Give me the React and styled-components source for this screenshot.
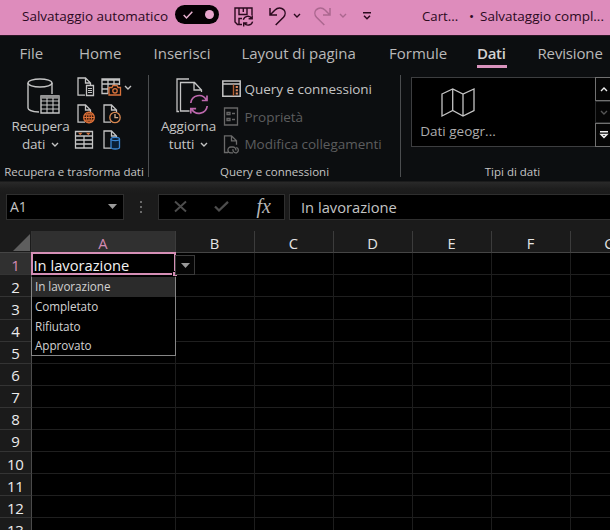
import React from "react";
import styled, { createGlobalStyle, css } from "styled-components";

const pink = "#de8cbc";
const plum = "#2b0a1e";
const ink = "#c4c4c4";
const dim = "#5c5d5e";

const GlobalStyle = createGlobalStyle`
  * { box-sizing: border-box; }
  body { margin: 0; background: #000; overflow: hidden; }
  svg { display: block; flex: none; overflow: visible; }
`;

const Window = styled.main`
  width: 610px;
  height: 530px;
  overflow: hidden;
  display: flex;
  flex-direction: column;
  background: #000;
  color: ${ink};
  font-family: "Open Sans", "Noto Sans", sans-serif;
  font-size: 13.5px;
  white-space: nowrap;
`;

/* ---------- Title bar ---------- */

const TitleBar = styled.header`
  height: 36px;
  flex: none;
  display: flex;
  align-items: flex-start;
  background: ${pink};
  border-bottom: 1px solid #2c1525;
  color: ${plum};
`;

const TitleText = styled.span`
  width: ${(p) => p.$w}px;
  flex: none;
  line-height: 20px;
  padding: 6px 0 0 ${(p) => p.$pad || 0}px;
  font-size: ${(p) => p.$size || 13.5}px;
`;

const Toggle = styled.button`
  width: 44px;
  height: 19px;
  flex: none;
  margin: 5px 15px 0 0;
  padding: 0 5px 0 8px;
  border: 0;
  border-radius: 10px;
  background: #050003;
  display: flex;
  align-items: center;
  justify-content: space-between;
`;

const Knob = styled.span`
  width: 9px;
  height: 9px;
  border-radius: 50%;
  background: #e9a5cc;
`;

const QuickIcon = styled.span`
  width: ${(p) => p.$w}px;
  flex: none;
  padding-top: ${(p) => p.$top}px;
  opacity: ${(p) => (p.$off ? 0.28 : 1)};
`;

/* ---------- Ribbon ---------- */

const Tabs = styled.nav`
  height: 34px;
  flex: none;
  display: flex;
  background: #0c0e10;
  padding-left: 19.5px;
`;

const Tab = styled.a`
  width: ${(p) => p.$w}px;
  flex: none;
  height: 32px;
  line-height: 34px;
  font-size: 15px;
  letter-spacing: ${(p) => p.$ls || 0}px;
  color: #b9b9b9;
  ${(p) =>
    p.$active &&
    css`
      width: 30px;
      margin-right: ${p.$w - 30}px;
      font-weight: 600;
      color: #d2d2d2;
      letter-spacing: -0.3px;
      border-bottom: 3px solid #d993bd;
    `}
`;

const Ribbon = styled.section`
  height: 111px;
  flex: none;
  display: flex;
  background: #0c0e10;
`;

const Group = styled.div`
  width: ${(p) => p.$w}px;
  flex: none;
  display: flex;
  flex-direction: column;
`;

const Separator = styled.div`
  width: 1px;
  height: 102px;
  margin-top: 5px;
  flex: none;
  background: #4b4d4f;
`;

const GroupBody = styled.div`
  height: 92px;
  padding: 7px 0 0 ${(p) => p.$left}px;
  display: flex;
  align-items: flex-start;
`;

const GroupLabel = styled.div`
  height: 19px;
  line-height: 19px;
  text-align: center;
  font-size: 11.5px;
`;

const BigButton = styled.button`
  width: ${(p) => p.$w}px;
  flex: none;
  padding: 1px 0 0;
  border: 0;
  background: none;
  color: inherit;
  font: inherit;
  line-height: 18px;
  letter-spacing: ${(p) => p.$ls || 0}px;
  display: flex;
  flex-direction: column;
  align-items: center;
`;

const BigIcon = styled.span`
  padding: 0 0 3px ${(p) => p.$shift}px;
`;

const BigCaption = styled.span`
  display: flex;
  align-items: center;
  gap: 6px;
`;

const IconGrid = styled.div`
  display: grid;
  grid-template-columns: 23.5px 23.5px 10px;
  grid-template-rows: 26.5px 26.5px 20px;
  padding-left: 3px;
`;

const CameraMenu = styled.span`
  padding-top: 8px;
`;

const CommandList = styled.div`
  display: flex;
  flex-direction: column;
  margin-top: -2px;
`;

const Command = styled.button`
  height: 27.8px;
  padding: 0;
  border: 0;
  background: none;
  font: inherit;
  color: ${(p) => (p.$off ? dim : ink)};
  display: grid;
  grid-template-columns: 22.5px auto;
  justify-content: start;
  align-items: center;
  letter-spacing: -0.03px;
`;

const Gallery = styled.div`
  width: 185px;
  height: 70px;
  flex: none;
  border: 1px solid #3d3e40;
  background: #000;
`;

const GalleryItem = styled.div`
  width: 92px;
  padding-top: 10px;
  display: flex;
  flex-direction: column;
  align-items: center;
  color: #adadad;
  line-height: 20px;
  gap: 4px;
`;

const GalleryScroll = styled.div`
  width: 20px;
  height: 70px;
  margin-left: -1px;
  flex: none;
  display: grid;
  grid-template-rows: 24px 22px 24px;
`;

const ScrollButton = styled.button`
  border: 1px solid ${(p) => (p.$off ? "#2c2d2e" : "#717171")};
  background: #050505;
  padding: 0 0 0 4px;
  display: flex;
  align-items: center;
`;

/* ---------- Formula bar ---------- */

const FormulaBar = styled.section`
  height: 50px;
  flex: none;
  display: flex;
  align-items: flex-start;
  padding: 13px 0 0 6px;
  background: linear-gradient(#0d0e0f 0, #292929 1px, #1d1d1d 8px, #1b1b1b 12px);
`;

const Field = styled.div`
  width: ${(p) => p.$w}px;
  height: 26px;
  flex: none;
  border: 1px solid #2f2f2f;
  background: #000;
  display: flex;
  align-items: center;
  font-size: ${(p) => p.$size || 14.7}px;
  padding: 0 ${(p) => p.$right || 0}px 1px ${(p) => p.$left}px;
  justify-content: space-between;
`;

const Grip = styled.div`
  width: 34px;
  height: 26px;
  flex: none;
  display: flex;
  align-items: center;
  justify-content: center;
`;

const FormulaValue = styled(Field)`
  margin-left: 4px;
`;

const Fx = styled.i`
  font: italic 20px/20px "Liberation Serif", serif;
  color: #b5b5b5;
  padding-bottom: 2px;
`;

/* ---------- Sheet ---------- */

const Sheet = styled.section`
  position: relative;
  display: grid;
  grid-template-columns: 31.5px 144px repeat(6, 79px);
  grid-template-rows: 22.3px repeat(13, 22.08px);
`;

const Corner = styled.div`
  background: #1b1b1b;
  border-right: 1px solid #333;
  border-bottom: 1px solid #454545;
  padding: 3px 1px 0 0;
  display: flex;
  justify-content: flex-end;
`;

const ColumnHead = styled.div`
  display: flex;
  align-items: center;
  justify-content: center;
  padding-top: 3px;
  font-size: 14.7px;
  color: ${(p) => (p.$active ? "#d58ab4" : "#e4e4e4")};
  background: ${(p) => (p.$active ? "#303030" : "#1b1b1b")};
  border-right: 1px solid #3c3c3c;
  border-bottom: 1px solid #454545;
`;

const RowHead = styled.div`
  display: flex;
  align-items: center;
  justify-content: center;
  padding-top: 2px;
  font-size: 15px;
  letter-spacing: -0.4px;
  color: ${(p) => (p.$active ? "#d58ab4" : "#ececec")};
  background: ${(p) => (p.$active ? "#303030" : "#1b1b1b")};
  border-right: 1px solid #4a4a4a;
  border-bottom: 1px solid #343434;
`;

const Cell = styled.div`
  border-right: 1px solid #1d1d1d;
  border-bottom: 1px solid #1f1f1f;
`;

const SelectedCell = styled.div`
  position: relative;
  margin: -1px 0 0 -1px;
  border: 2px solid #d58fb6;
  background: #000;
  color: #f2f2f2;
  font-size: 14.7px;
  line-height: 22px;
  padding-left: 1px;
  z-index: 2;
`;

const FillHandle = styled.span`
  position: absolute;
  right: -3px;
  bottom: -3px;
  width: 5px;
  height: 5px;
  background: #d58fb6;
  border: solid #000;
  border-width: 1px 0 0 1px;
`;

const DropButton = styled.button`
  position: absolute;
  left: 175px;
  top: 24px;
  width: 20px;
  height: 20px;
  padding: 0;
  border: 1px solid #3a3a3a;
  background: #050505;
  display: flex;
  align-items: center;
  justify-content: center;
  z-index: 3;
`;

const Menu = styled.ul`
  position: absolute;
  left: 31px;
  top: 46px;
  width: 145px;
  height: 79px;
  margin: 0;
  padding: 0;
  list-style: none;
  border: 1px solid #868686;
  border-top: 0;
  background: #000;
  z-index: 1;
`;

const Option = styled.li`
  height: 19.8px;
  line-height: 19.6px;
  padding-left: 3px;
  font-size: 11.7px;
  letter-spacing: -0.06px;
  color: #d2d2d2;
  background: ${(p) => (p.$active ? "#2b2b2b" : "transparent")};
`;

/* ---------- Icons ---------- */

const Line = styled.svg.attrs({ fill: "none" })`
  stroke: ${(p) => p.$c || ink};
  stroke-width: ${(p) => p.$sw || 1.3};
`;

const Chevron = ({ c = ink, up }) => (
  <Line width="8" height="5" viewBox="0 0 8 5" $c={c} $sw="1.4">
    <path d={up ? "M1 4l3-3 3 3" : "M1 1l3 3 3-3"} />
  </Line>
);

const Caret = () => (
  <svg width="9" height="5" viewBox="0 0 9 5">
    <path d="M0 0h9L4.5 5z" fill="#9a9a9a" />
  </svg>
);

const SaveIcon = () => (
  <Line width="20" height="20" viewBox="0 0 20 20" $c={plum} $sw="1.4">
    <path d="M8 17.5H3.5L1 15V1h17v7M5 1v6.500h8V1M9.300 1v4M5 17v-5.500h3" />
    <path d="M9.300 12.800a4.700 4.700 0 0 1 8.500-1.300M18.200 8.200v3.600h-3.600M18.600 14.600a4.700 4.700 0 0 1-8.400 1.500M9.700 19.600V16h3.600" />
  </Line>
);

const UndoIcon = ({ flip }) => (
  <Line width="17" height="19" viewBox="0 0 17 19" $c={plum} $sw="1.5">
    <path
      transform={flip ? "matrix(-1 0 0 1 17 0)" : undefined}
      d="M1 1v7h7M1.300 7.700L6 3.100C9-.1 12.600.6 14.600 2.600c2 2.100 2 5.400-.1 7.600L6.700 18"
    />
  </Line>
);

const CustomizeIcon = () => (
  <Line width="8" height="8" viewBox="0 0 8 8" $c={plum} $sw="1.5">
    <path d="M0 .8h8M1 3.800l3 3 3-3" />
  </Line>
);

const DatabaseIcon = () => (
  <Line width="33" height="36" viewBox="0 0 33 36" $sw="1.4">
    <ellipse cx="13" cy="5" rx="12" ry="4" />
    <path d="M1 5v25c0 2 4.500 3.700 11 4M25 5v11" />
    <path d="M14 18h18v17H14z" fill="#0c0e10" />
    <path d="M14 19.400h18" strokeWidth="2.6" stroke="#929292" />
    <path d="M14 23h18M14 27h18M14 31h18M20 20v15M26 20v15" strokeWidth="1.1" />
  </Line>
);

const Page = () => <path d="M8 18.200H1V1h7.500l5 5v2M8.500 1v5h5" />;

const TextFileIcon = () => (
  <Line width="18" height="20" viewBox="0 0 18 20">
    <Page />
    <path d="M9.500 8.500h7v10h-7z" fill="#0c0e10" />
    <path d="M11 11.500h4M11 13.500h4M11 15.500h4" strokeWidth="1" />
  </Line>
);

const CameraTableIcon = () => (
  <Line width="20" height="20" viewBox="0 0 20 20">
    <path d="M7 16.500H1V2h17.500v6M1 3h17.500M1 7h17.500M1 12h6M7 2v14.500M13 2v6" />
    <path d="M8 10.500h3l1-2h4l1 2h2.500v7.500H8z" stroke="#d9733c" fill="#0c0e10" />
    <circle cx="14" cy="13.800" r="2.200" stroke="#d9733c" />
  </Line>
);

const WebFileIcon = () => (
  <Line width="18" height="20" viewBox="0 0 18 20">
    <Page />
    <circle cx="12" cy="13.500" r="5.300" fill="#32170b" stroke="#dc7038" />
    <path d="M6.700 13.500h10.600M7.700 10.800h8.600M7.700 16.200h8.600M12 8.200v10.600" stroke="#dc7038" strokeWidth="1" />
    <ellipse cx="12" cy="13.500" rx="2.500" ry="5.300" stroke="#dc7038" strokeWidth="1" />
  </Line>
);

const RecentFileIcon = () => (
  <Line width="20" height="20" viewBox="-2 0 20 20">
    <Page />
    <circle cx="12" cy="13.500" r="5.200" fill="#0c0e10" stroke="#d98850" />
    <path d="M12 10v3.700h3.200" stroke="#d9b08c" />
  </Line>
);

const TableIcon = () => (
  <Line width="18" height="20" viewBox="1.5 0 18 20">
    <path d="M0 1.500h17v16.500H0zM0 6h17M0 10h17M0 14h17M8.500 6v12" />
    <path d="M2.500 2.800h4.500l-2.200 2.500zM10.500 2.800H15l-2.200 2.500z" fill="#d9733c" stroke="none" />
  </Line>
);

const SourceFileIcon = () => (
  <Line width="20" height="20" viewBox="-2 0 20 20">
    <Page />
    <path d="M8 9v8.500c0 2 8.500 2 8.500 0V9" fill="#0b2036" stroke="#3b86d2" />
    <ellipse cx="12.250" cy="9" rx="4.250" ry="1.600" fill="#0b2036" stroke="#3b86d2" />
  </Line>
);

const RefreshIcon = () => (
  <Line width="33" height="36" viewBox="0 0 33 36">
    <path d="M13 1H1v32.500h2M13.500 33H4.500V4.500h14l7 7.500v2M18 4.500V12h7.500" />
    <g stroke="#bd68ad" strokeWidth="1.7">
      <path d="M14.800 25a8.300 8.300 0 0 1 15.500-3.200M31 17.500v5h-5.200M31.200 28a8.300 8.300 0 0 1-15.500 3M14.800 35.600v-5h5.300" />
    </g>
  </Line>
);

const QueriesIcon = () => (
  <Line width="19" height="18" viewBox="0 0 19 18" $sw="1.5">
    <path d="M.8 1h17.400v15.300H.8zM.8 4h17.400" />
    <path d="M11.500 4.500v11.300" stroke="#b45e30" strokeWidth="1.4" />
    <path d="M14.800 6v9" stroke="#dd8a62" strokeWidth="2.2" strokeDasharray="2 1.3" />
  </Line>
);

const PropertiesIcon = () => (
  <Line width="19" height="19" viewBox="0 0 19 19" $c="#666">
    <path d="M2.500 1h13v17h-13zM5 5.500h3v2H5zM5 11.500h3v2H5zM10 6.500h3M10 12.500h3" />
  </Line>
);

const LinksIcon = () => (
  <Line width="19" height="19" viewBox="0 0 19 19" $c="#6a6a6a">
    <path d="M6 17.500H2.500V.8h7l5 5v4M9.500.8v5h5" />
    <path d="M11 17.800H8.800a2.900 2.900 0 0 1 0-5.800h2.400a2.900 2.900 0 0 1 2.600 3.500M14.300 12.300a2.900 2.900 0 0 1 .2 5.500h-.8a2.900 2.900 0 0 1-2.700-3.600" />
  </Line>
);

const MapIcon = () => (
  <Line width="34" height="29" viewBox="0 0 34 29">
    <path d="M1 6l10.700-5L22 6l11-5v21.500L22 28l-10.300-5.500L1 28zM11.700 1v21.500M22 6v22" />
  </Line>
);

const tabs = [
  ["File", 59.5],
  ["Home", 74.5],
  ["Inserisci", 88],
  ["Layout di pagina", 147.5, -0.05],
  ["Formule", 88],
  ["Dati", 60.5],
  ["Revisione", 80, -0.15],
];
const columns = ["A", "B", "C", "D", "E", "F", "G"];
const rows = Array.from({ length: 13 }, (_, i) => i + 1);
const options = ["In lavorazione", "Completato", "Rifiutato", "Approvato"];

export default function App() {
  return (
    <Window>
      <GlobalStyle />
      <TitleBar>
        <TitleText $w={175} $pad={22}>Salvataggio automatico</TitleText>
        <Toggle aria-label="Salvataggio automatico">
          <Line width="10" height="8" viewBox="0 0 10 8" $c="#e9b0d0" $sw="1.5">
            <path d="M.7 4l2.800 3L9.300.8" />
          </Line>
          <Knob />
        </Toggle>
        <QuickIcon $w={35} $top={7}><SaveIcon /></QuickIcon>
        <QuickIcon $w={24} $top={7}><UndoIcon /></QuickIcon>
        <QuickIcon $w={20.5} $top={13}><Chevron c={plum} /></QuickIcon>
        <QuickIcon $w={25} $top={7} $off><UndoIcon flip /></QuickIcon>
        <QuickIcon $w={24.5} $top={13} $off><Chevron c={plum} /></QuickIcon>
        <QuickIcon $w={59} $top={12}><CustomizeIcon /></QuickIcon>
        <TitleText $w={47} $size={13.2}>Cart...</TitleText>
        <TitleText $w={11}>•</TitleText>
        <TitleText $w={130}>Salvataggio compl...</TitleText>
      </TitleBar>

      <Tabs>
        {tabs.map(([name, w, ls]) => (
          <Tab key={name} $w={w} $ls={ls} $active={name === "Dati"}>{name}</Tab>
        ))}
      </Tabs>

      <Ribbon>
        <Group $w={148}>
          <GroupBody $left={7}>
            <BigButton $w={67} $ls={-0.2}>
              <BigIcon $shift={6}><DatabaseIcon /></BigIcon>
              <BigCaption>Recupera</BigCaption>
              <BigCaption>dati <Chevron /></BigCaption>
            </BigButton>
            <IconGrid>
              <TextFileIcon />
              <CameraTableIcon />
              <CameraMenu><Chevron /></CameraMenu>
              <WebFileIcon />
              <RecentFileIcon />
              <span />
              <TableIcon />
              <SourceFileIcon />
            </IconGrid>
          </GroupBody>
          <GroupLabel>Recupera e trasforma dati</GroupLabel>
        </Group>
        <Separator />
        <Group $w={251}>
          <GroupBody $left={6}>
            <BigButton $w={67} $ls={-0.1}>
              <BigIcon $shift={7}><RefreshIcon /></BigIcon>
              <BigCaption>Aggiorna</BigCaption>
              <BigCaption>tutti <Chevron /></BigCaption>
            </BigButton>
            <CommandList>
              <Command><QueriesIcon />Query e connessioni</Command>
              <Command $off><PropertiesIcon />Proprietà</Command>
              <Command $off><LinksIcon />Modifica collegamenti</Command>
            </CommandList>
          </GroupBody>
          <GroupLabel>Query e connessioni</GroupLabel>
        </Group>
        <Separator />
        <Group $w={223}>
          <GroupBody $left={10}>
            <Gallery>
              <GalleryItem><MapIcon />Dati geogr...</GalleryItem>
            </Gallery>
            <GalleryScroll>
              <ScrollButton><Chevron up c="#eee" /></ScrollButton>
              <ScrollButton $off><Chevron c="#555" /></ScrollButton>
              <ScrollButton>
                <Line width="8" height="8" viewBox="0 0 8 8" $c="#eee" $sw="1.4">
                  <path d="M0 .7h8M1 3.500l3 3 3-3z" />
                </Line>
              </ScrollButton>
            </GalleryScroll>
          </GroupBody>
          <GroupLabel>Tipi di dati</GroupLabel>
        </Group>
      </Ribbon>

      <FormulaBar>
        <Field $w={118} $left={3} $right={6} $size={14}>A1 <Caret /></Field>
        <Grip>
          <svg width="2" height="13" viewBox="0 0 2 13" fill="#6a6a6a">
            <path d="M0 0h2v2H0zM0 5h2v2H0zM0 10h2v2H0z" />
          </svg>
        </Grip>
        <Field $w={127} $left={15} $right={13}>
          <Line width="13" height="11" viewBox="0 0 13 11" $c="#4d4d4d" $sw="1.9">
            <path d="M1 .5l11 10M12 .5L1 10.500" />
          </Line>
          <Line width="15" height="11" viewBox="0 0 15 11" $c="#4d4d4d" $sw="2.3">
            <path d="M1 5.500l4 4L14 .8" />
          </Line>
          <Fx>fx</Fx>
        </Field>
        <FormulaValue $w={330} $left={11}>In lavorazione</FormulaValue>
      </FormulaBar>

      <Sheet>
        <Corner>
          <svg width="17" height="17" viewBox="0 0 17 17"><path d="M17 0v17H0z" fill="#5e5e5e" /></svg>
        </Corner>
        {columns.map((c) => <ColumnHead key={c} $active={c === "A"}>{c}</ColumnHead>)}
        {rows.map((r) => (
          <React.Fragment key={r}>
            <RowHead $active={r === 1}>{r}</RowHead>
            {columns.map((c) =>
              r === 1 && c === "A" ? (
                <SelectedCell key={c}>In lavorazione<FillHandle /></SelectedCell>
              ) : (
                <Cell key={c} />
              )
            )}
          </React.Fragment>
        ))}
        <DropButton aria-label="Apri elenco"><Caret /></DropButton>
        <Menu>
          {options.map((o, i) => <Option key={o} $active={i === 0}>{o}</Option>)}
        </Menu>
      </Sheet>
    </Window>
  );
}
